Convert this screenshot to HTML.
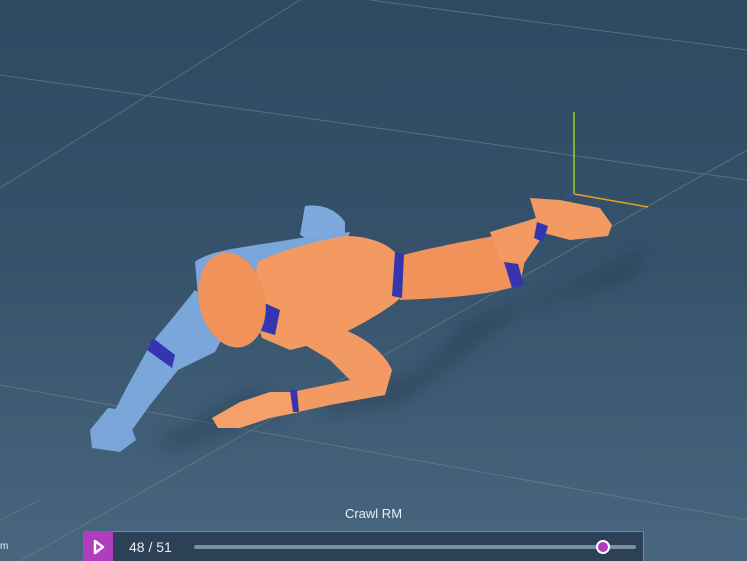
<!DOCTYPE html>
<html><head><style>
html,body{margin:0;padding:0;width:747px;height:561px;overflow:hidden;font-family:"Liberation Sans",sans-serif}
.bg{position:absolute;inset:0;background:linear-gradient(180deg,#2e4962 0%,#36526b 45%,#48667f 100%)}
</style></head><body>
<div class="bg"></div>
<svg width="747" height="561" style="position:absolute;left:0;top:0">
<defs><filter id="b"><feGaussianBlur stdDeviation="8"/></filter></defs>
<g stroke="#6a8a80" stroke-width="1" opacity="0.6" fill="none">
<line x1="370" y1="0" x2="747" y2="50"/>
<line x1="0" y1="75" x2="747" y2="180"/>
<line x1="0" y1="385" x2="747" y2="520"/>
<line x1="0" y1="188" x2="300" y2="0"/>
<line x1="20" y1="561" x2="747" y2="150"/>
<line x1="0" y1="520" x2="40" y2="500"/>
</g>
<!-- shadow -->
<g filter="url(#b)" opacity="0.35" fill="#1e3044">
<path d="M330,400 L420,370 L470,320 L560,290 L650,245 L630,280 L520,310 L470,350 L400,405 L320,415 Z"/>
<path d="M150,445 L250,390 L290,410 L180,450Z"/>
</g>
<!-- axes -->
<line x1="574" y1="112" x2="574" y2="194" stroke="#9ad020" stroke-width="1.5"/>
<line x1="574" y1="194" x2="648" y2="207" stroke="#e8a020" stroke-width="1.5"/>
<line x1="574" y1="194" x2="566" y2="198" stroke="#3050e0" stroke-width="1.5"/>
<!-- blue body -->
<path d="M305,206 C320,204 335,208 345,222 L345,240 L320,245 L300,235Z" fill="#7ea9dc"/>
<path d="M195,262 C210,250 240,248 300,238 L350,232 L340,260 L290,300 L250,340 L200,320Z" fill="#7aa6db"/>
<path d="M195,290 L232,320 L215,352 L178,370 L150,405 L132,430 L110,420 L128,385 L150,345 L175,315Z" fill="#7aa6da"/>
<path d="M153,338 L175,355 L172,368 L147,350Z" fill="#3535b0"/>
<path d="M108,408 L125,410 L136,440 L120,452 L92,448 L90,430Z" fill="#7ba5d8"/>
<!-- orange leg -->
<path d="M392,258 C420,250 460,242 500,235 L525,260 L520,285 C490,295 450,298 400,300Z" fill="#f0925a"/>
<path d="M490,232 L530,220 L545,215 L540,240 L525,262 L500,260Z" fill="#f29a62"/>
<path d="M530,198 L560,200 L600,208 L612,225 L608,236 L570,240 L540,232Z" fill="#f29a62"/>
<path d="M504,262 L518,264 L524,285 L512,288Z" fill="#3535b0"/>
<path d="M537,222 L548,226 L543,242 L534,238Z" fill="#3535b0"/>
<!-- torso -->
<path d="M258,262 C280,250 320,240 345,236 C372,236 390,245 398,256 L402,296 C390,310 350,330 330,340 L290,350 L262,338 L250,300Z" fill="#f29a62"/>
<path d="M395,252 L404,254 L402,298 L392,296Z" fill="#3535b0"/>
<path d="M258,300 L280,310 L275,335 L258,330Z" fill="#3535b0"/>
<!-- arm -->
<path d="M300,342 L345,330 C370,340 385,355 392,370 L385,395 L330,405 L298,412 L292,392 L350,380 L330,360Z" fill="#f29a62"/>
<path d="M292,392 L300,412 L270,418 L240,428 L218,428 L212,418 L240,402 L270,392Z" fill="#f5a068"/>
<path d="M290,390 L297,390 L299,412 L293,412Z" fill="#3535b0"/>
<!-- head -->
<ellipse cx="232" cy="300" rx="33" ry="48" transform="rotate(-12 232 300)" fill="#f0925a"/>
</svg>
<div style="position:absolute;left:0;top:506px;width:747px;text-align:center;color:#e8eef4;font-size:13px">Crawl RM</div>
<div style="position:absolute;left:0;top:541px;color:#e8eef4;font-size:10px">m</div>
<div style="position:absolute;left:83px;top:531px;width:561px;height:30px;background:#2c4155;border:1px solid #6a8aa4;border-bottom:none;box-sizing:border-box"></div>
<div style="position:absolute;left:83px;top:531px;width:30px;height:30px;background:#b03cc0"></div>
<svg width="30" height="30" style="position:absolute;left:83px;top:531px"><path d="M12,10 L20,16 L12,22Z" fill="none" stroke="#fff" stroke-width="2.5" stroke-linejoin="round"/></svg>
<div style="position:absolute;left:129px;top:539px;color:#e8eef4;font-size:14px">48 / 51</div>
<div style="position:absolute;left:194px;top:545px;width:442px;height:4px;border-radius:2px;background:#7890a6"></div>
<div style="position:absolute;left:596px;top:540px;width:10px;height:10px;border-radius:50%;background:#b03cc0;border:2.5px solid #fff"></div>
</body></html>
